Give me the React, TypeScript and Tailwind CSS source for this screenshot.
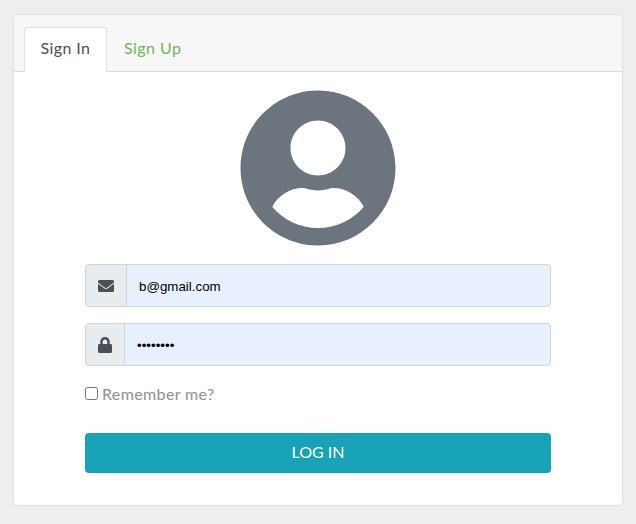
import { useState } from "react";
import { FaEnvelope, FaLock, FaUserCircle } from "react-icons/fa";

const field =
  "min-w-0 flex-1 rounded-r border border-[#ced4da] bg-[#e8f0fe] px-3 pt-[2px] font-['Liberation_Sans',Arial,sans-serif] text-[13.333px] text-black outline-none";
const addon =
  "-mr-px flex items-center rounded-l border border-[#ced4da] bg-[#e9ecef] px-3 text-base text-[#495057]";

export default function App() {
  const [email, setEmail] = useState("b@gmail.com");
  const [password, setPassword] = useState("password");

  return (
    <div className="h-[524px] bg-[#eeeeee] pt-[14px] pr-[13px] pl-[13px] font-['Lato',sans-serif] text-base leading-6">
      <div className="flex h-[492px] flex-col rounded border border-[#dfdfdf] bg-white">
        <div className="flex h-[57px] shrink-0 items-end rounded-t-[3px] border-b border-[#d9d9d9] bg-[#f7f7f7] pl-[10px]">
          <a className="-mb-px flex h-[45px] w-[83px] items-center rounded-t border border-b-0 border-[#dee2e6] bg-white pb-[5px] pl-[15.5px] text-[#495057]">
            <span className="tracking-[0.4px]">Sign In</span>
          </a>
          <a className="flex h-[44px] items-center pb-[2px] pl-[17px] text-[#74b25a]">
            <span className="tracking-[0.45px]">Sign Up</span>
          </a>
        </div>
        <form className="flex flex-col px-[71px] pt-4" onSubmit={(e) => e.preventDefault()}>
          <FaUserCircle className="h-[160px] w-[156px] self-center text-[#6c757d]" />
          <div className="mt-4 flex h-[43px]">
            <span className={addon}>
              <FaEnvelope className="size-4" />
            </span>
            <input className={field} type="email" value={email} onChange={(e) => setEmail(e.target.value)} />
          </div>
          <div className="mt-4 flex h-[43px]">
            <span className={addon}>
              <FaLock className="h-4 w-[14px]" />
            </span>
            <input className={field} type="password" value={password} onChange={(e) => setPassword(e.target.value)} />
          </div>
          <label className="mt-4 flex h-6 items-center text-[#8b9198]">
            <input type="checkbox" className="-mt-px mr-1 size-[13px]" />
            <span className="tracking-[0.37px]">Remember me?</span>
          </label>
          <button className="mt-[27px] h-10 rounded bg-[#17a2b8] pb-[2px] text-white">LOG IN</button>
        </form>
      </div>
    </div>
  );
}
